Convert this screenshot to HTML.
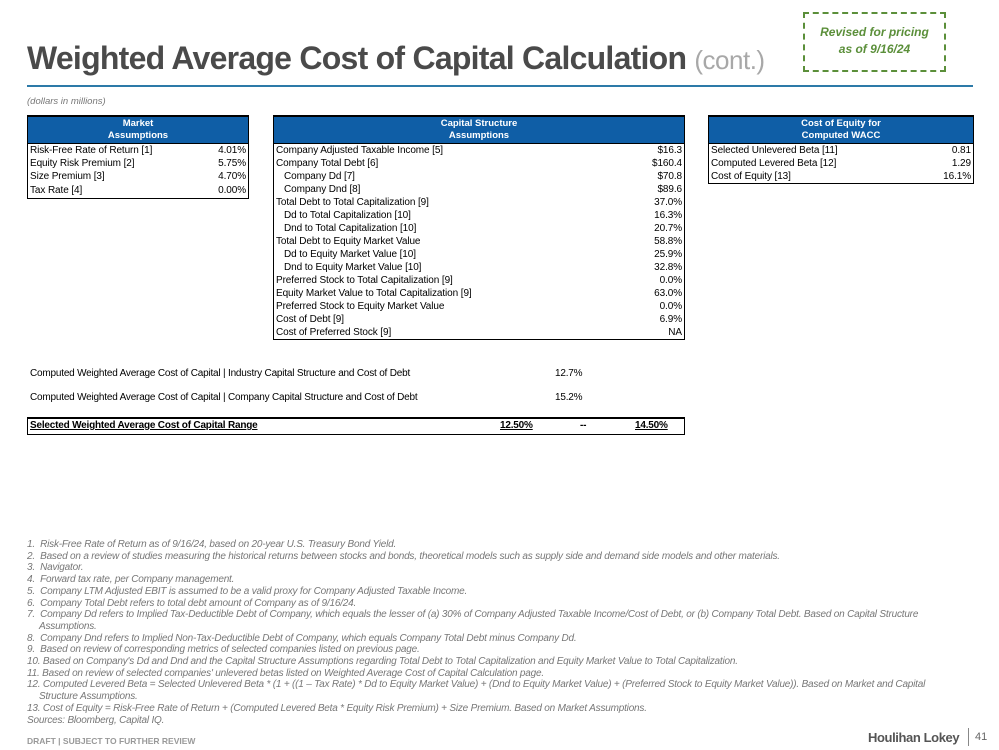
<!DOCTYPE html>
<html><head><meta charset="utf-8"><style>
body{margin:0;width:999px;height:750px;background:#fff;font-family:"Liberation Sans",sans-serif;position:relative;overflow:hidden;color:#000}
.a{position:absolute}
.title{left:27px;top:40px;font-size:32px;font-weight:bold;color:#4a4a4a;letter-spacing:-0.75px;white-space:nowrap}
.title span{font-weight:normal;color:#a8a8a8;font-size:26px;letter-spacing:-0.5px}
.rule{left:27px;top:85px;width:946px;height:2px;background:#2d7aa8}
.rev{left:803px;top:12px;width:143px;height:60px;border:2px dashed #5b8f3a;color:#5b8f3a;font-style:italic;font-weight:bold;font-size:12px;text-align:center;line-height:17px;box-sizing:border-box;padding-top:10px}
.dm{left:27px;top:96px;font-size:9.5px;font-style:italic;color:#777}
table{border-collapse:collapse;font-size:10px;position:absolute;border:1px solid #000;border-top:2px solid #000}
th{background:#0f5ea6;color:#fff;font-weight:bold;font-size:9.5px;line-height:12px;padding:1px 0 1px;text-align:center;border-bottom:1px solid #000}
td{padding:0 2px;height:13px;line-height:13px;white-space:nowrap;letter-spacing:-0.1px}
td.r{text-align:right}
.in{padding-left:10px}
.w{font-size:10px;white-space:nowrap;letter-spacing:-0.2px}
.fn{left:27px;top:539px;font-size:10px;font-style:italic;color:#777;line-height:11.7px;width:930px;letter-spacing:-0.2px}
.fn div{padding-left:12px;text-indent:-12px}
</style></head><body>
<div class="a title">Weighted Average Cost of Capital Calculation <span>(cont.)</span></div>
<div class="a rule"></div>
<div class="a rev">Revised for pricing<br>as of 9/16/24</div>
<div class="a dm">(dollars in millions)</div>

<table style="left:27px;top:115px;width:222px">
<tr><th colspan="2">Market<br>Assumptions</th></tr>
<tr><td>Risk-Free Rate of Return [1]</td><td class="r">4.01%</td></tr>
<tr><td>Equity Risk Premium [2]</td><td class="r">5.75%</td></tr>
<tr><td>Size Premium [3]</td><td class="r">4.70%</td></tr>
<tr><td style="height:15px">Tax Rate [4]</td><td class="r">0.00%</td></tr>
</table>

<table style="left:273px;top:115px;width:412px">
<tr><th colspan="2">Capital Structure<br>Assumptions</th></tr>
<tr><td>Company Adjusted Taxable Income [5]</td><td class="r">$16.3</td></tr>
<tr><td>Company Total Debt [6]</td><td class="r">$160.4</td></tr>
<tr><td class="in">Company Dd [7]</td><td class="r">$70.8</td></tr>
<tr><td class="in">Company Dnd [8]</td><td class="r">$89.6</td></tr>
<tr><td>Total Debt to Total Capitalization [9]</td><td class="r">37.0%</td></tr>
<tr><td class="in">Dd to Total Capitalization [10]</td><td class="r">16.3%</td></tr>
<tr><td class="in">Dnd to Total Capitalization [10]</td><td class="r">20.7%</td></tr>
<tr><td>Total Debt to Equity Market Value</td><td class="r">58.8%</td></tr>
<tr><td class="in">Dd to Equity Market Value [10]</td><td class="r">25.9%</td></tr>
<tr><td class="in">Dnd to Equity Market Value [10]</td><td class="r">32.8%</td></tr>
<tr><td>Preferred Stock to Total Capitalization [9]</td><td class="r">0.0%</td></tr>
<tr><td>Equity Market Value to Total Capitalization [9]</td><td class="r">63.0%</td></tr>
<tr><td>Preferred Stock to Equity Market Value</td><td class="r">0.0%</td></tr>
<tr><td>Cost of Debt [9]</td><td class="r">6.9%</td></tr>
<tr><td>Cost of Preferred Stock [9]</td><td class="r">NA</td></tr>
</table>

<table style="left:708px;top:115px;width:266px">
<tr><th colspan="2">Cost of Equity for<br>Computed WACC</th></tr>
<tr><td>Selected Unlevered Beta [11]</td><td class="r">0.81</td></tr>
<tr><td>Computed Levered Beta [12]</td><td class="r">1.29</td></tr>
<tr><td>Cost of Equity [13]</td><td class="r">16.1%</td></tr>
</table>

<div class="a w" style="left:30px;top:368px">Computed Weighted Average Cost of Capital | Industry Capital Structure and Cost of Debt</div>
<div class="a w" style="left:555px;top:368px">12.7%</div>
<div class="a w" style="left:30px;top:392px">Computed Weighted Average Cost of Capital | Company Capital Structure and Cost of Debt</div>
<div class="a w" style="left:555px;top:392px">15.2%</div>
<div class="a" style="left:27px;top:417px;width:656px;height:15px;border:1px solid #000;border-top:2px solid #000"></div>
<div class="a w" style="left:30px;top:420px;font-weight:bold;text-decoration:underline">Selected Weighted Average Cost of Capital Range</div>
<div class="a w" style="left:500px;top:420px;font-weight:bold;text-decoration:underline">12.50%</div>
<div class="a w" style="left:580px;top:420px;font-weight:bold">--</div>
<div class="a w" style="left:635px;top:420px;font-weight:bold;text-decoration:underline">14.50%</div>

<div class="a fn">
<div>1.&nbsp; Risk-Free Rate of Return as of 9/16/24, based on 20-year U.S. Treasury Bond Yield.</div>
<div>2.&nbsp; Based on a review of studies measuring the historical returns between stocks and bonds, theoretical models such as supply side and demand side models and other materials.</div>
<div>3.&nbsp; Navigator.</div>
<div>4.&nbsp; Forward tax rate, per Company management.</div>
<div>5.&nbsp; Company LTM Adjusted EBIT is assumed to be a valid proxy for Company Adjusted Taxable Income.</div>
<div>6.&nbsp; Company Total Debt refers to total debt amount of Company as of 9/16/24.</div>
<div>7.&nbsp; Company Dd refers to Implied Tax-Deductible Debt of Company, which equals the lesser of (a) 30% of Company Adjusted Taxable Income/Cost of Debt, or (b) Company Total Debt. Based on Capital Structure Assumptions.</div>
<div>8.&nbsp; Company Dnd refers to Implied Non-Tax-Deductible Debt of Company, which equals Company Total Debt minus Company Dd.</div>
<div>9.&nbsp; Based on review of corresponding metrics of selected companies listed on previous page.</div>
<div>10. Based on Company's Dd and Dnd and the Capital Structure Assumptions regarding Total Debt to Total Capitalization and Equity Market Value to Total Capitalization.</div>
<div>11. Based on review of selected companies' unlevered betas listed on Weighted Average Cost of Capital Calculation page.</div>
<div>12. Computed Levered Beta = Selected Unlevered Beta * (1 + ((1 – Tax Rate) * Dd to Equity Market Value) + (Dnd to Equity Market Value) + (Preferred Stock to Equity Market Value)). Based on Market and Capital Structure Assumptions.</div>
<div>13. Cost of Equity = Risk-Free Rate of Return + (Computed Levered Beta * Equity Risk Premium) + Size Premium. Based on Market Assumptions.</div>
<div style="padding-left:0;text-indent:0">Sources: Bloomberg, Capital IQ.</div>
</div>

<div class="a" style="left:27px;top:736px;font-size:8.5px;font-weight:bold;color:#999">DRAFT | SUBJECT TO FURTHER REVIEW</div>
<div class="a" style="left:868px;top:730px;font-size:13px;font-weight:bold;color:#555;letter-spacing:-0.4px">Houlihan Lokey</div>
<div class="a" style="left:968px;top:728px;width:1px;height:18px;background:#888"></div>
<div class="a" style="left:975px;top:731px;font-size:11px;color:#666">41</div>
</body></html>
